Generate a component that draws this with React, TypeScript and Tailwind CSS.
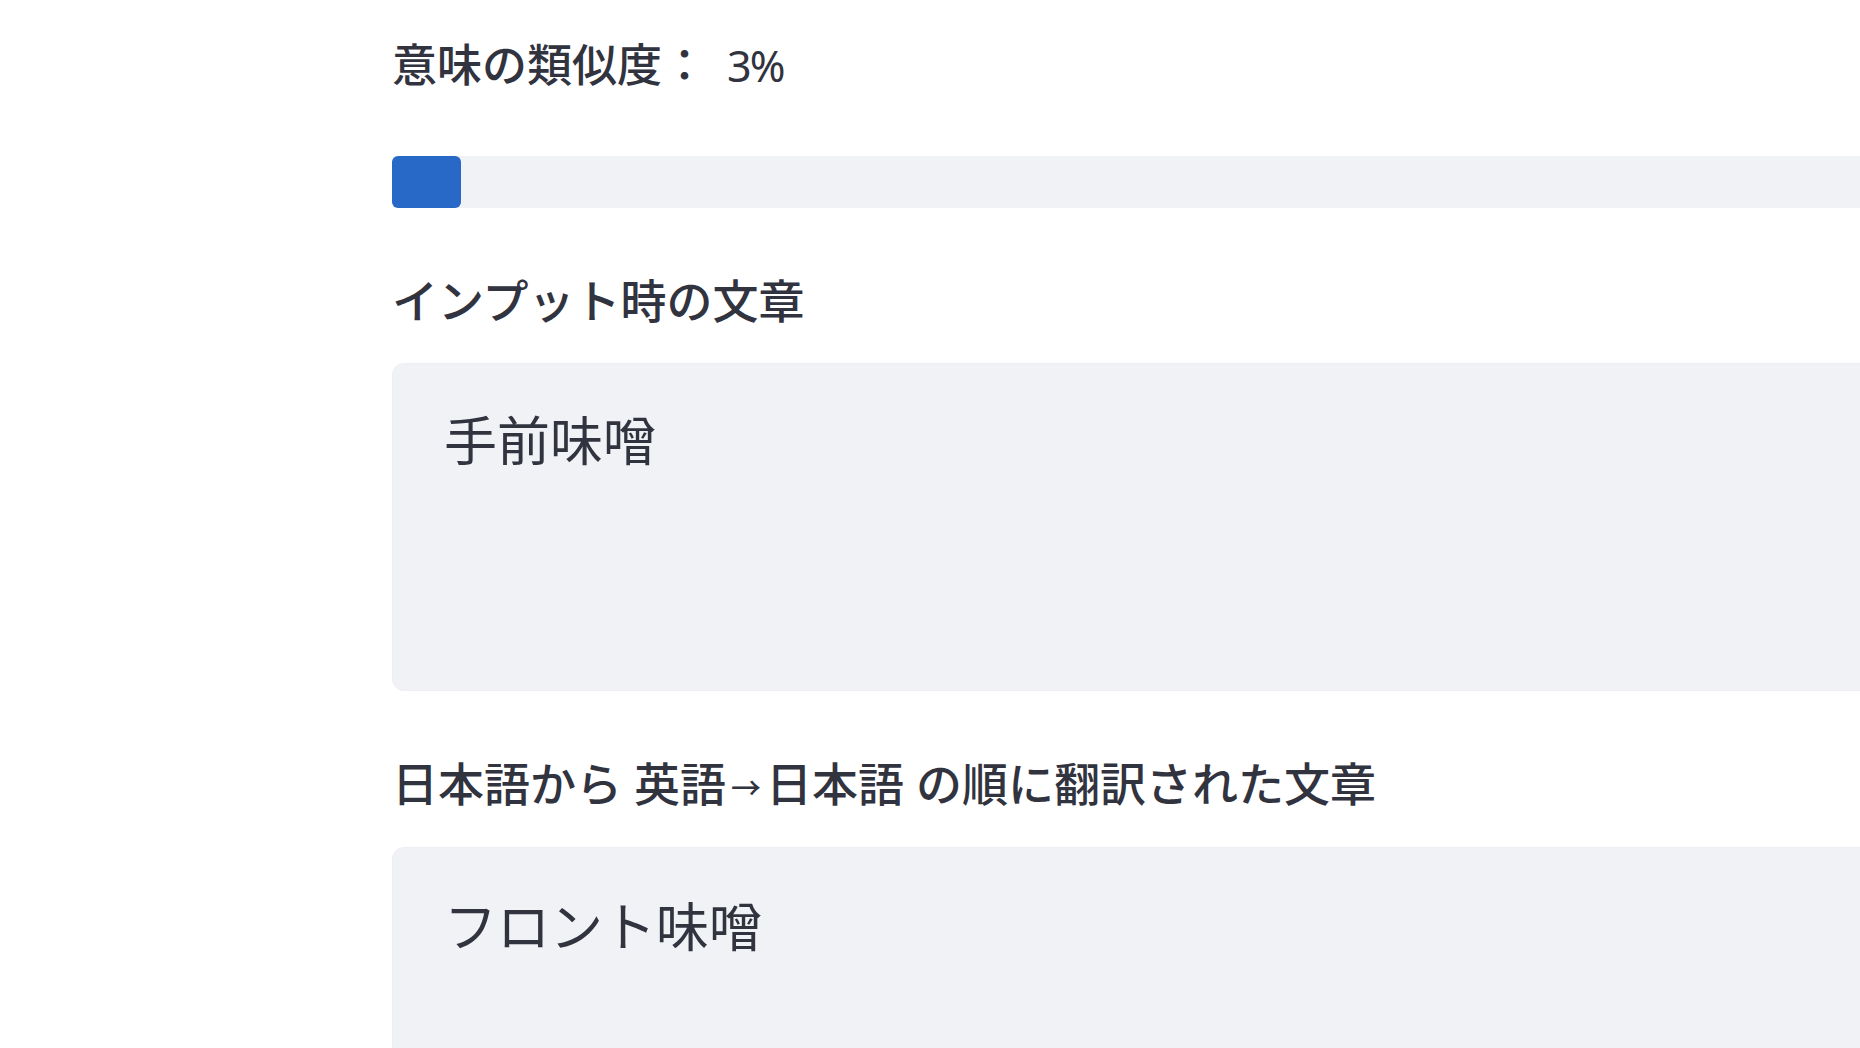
import React from "react";

const similarity = 3;

const jp = { fontFamily: '"Noto Sans", "Noto Sans CJK JP", sans-serif' };

export default function App() {
  return (
    <div className="w-screen h-screen overflow-hidden bg-white text-[#31333f]" style={jp}>
      <div className="w-[2300px] pl-[392px] pt-[34px] flex flex-col">
        {/* 類似度 */}
        <h2 className="text-[45px] leading-[62px] font-medium flex items-baseline">
          <span>意味の類似度：</span>
          <span className="ml-[20px] text-[43px] font-normal tracking-[-2px]">{similarity}%</span>
        </h2>

        {/* Progress */}
        <div className="mt-[59px] h-[52px] w-full bg-[#f0f2f6] rounded-md">
          <div className="h-full w-[69px] bg-[#2868c6] rounded-md" />
        </div>

        {/* Input */}
        <h3 className="mt-[61px] text-[46px] leading-[62px] font-medium">インプット時の文章</h3>
        <div className="mt-[32px] h-[328px] w-full bg-[#f0f2f6] rounded-xl border border-[#eceef3] pl-[51px] pt-[40px]">
          <p className="text-[53px] leading-[74px]">手前味噌</p>
        </div>

        {/* Output */}
        <h3 className="mt-[61px] h-[62px] text-[46px] leading-[62px] font-medium flex items-center whitespace-pre">
          <span>日本語から 英語</span>
          <span className="mx-[5px] mt-[6px] text-[30px] leading-none" style={{ fontFamily: '"Noto Sans CJK JP", sans-serif' }}>→</span>
          <span>日本語 の順に翻訳された文章</span>
        </h3>
        <div className="mt-[33px] h-[328px] w-full bg-[#f0f2f6] rounded-xl border border-[#eceef3] pl-[51px] pt-[42px]">
          <p className="text-[53px] leading-[74px]">フロント味噌</p>
        </div>
      </div>
    </div>
  );
}
